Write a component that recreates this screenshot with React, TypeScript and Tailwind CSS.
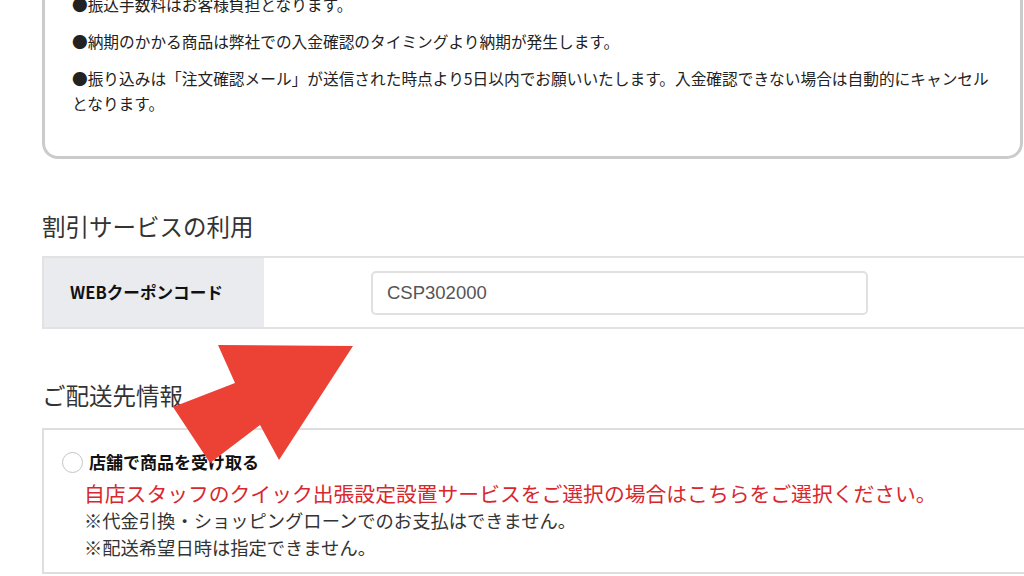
export default function App() {
    const jp = { fontFamily: '"Noto Sans CJK JP", "Noto Sans", sans-serif' };

    return (
        <div className="relative w-[1024px] h-[576px] overflow-hidden bg-white text-[#222]" style={jp}>
            <div className="pl-[42px]">
                {/* Payment notes */}
                <div className="-mt-[30px] w-[981px] rounded-b-[16px] border-[3px] border-t-0 border-[#cbcbcb] pl-[27px] pr-[16px] pt-[22px] pb-[40px] text-[15.7px] leading-[25px]">
                    <p className="mb-[12px] whitespace-nowrap">●振込手数料はお客様負担となります。</p>
                    <p className="mb-[12px] whitespace-nowrap">●納期のかかる商品は弊社での入金確認のタイミングより納期が発生します。</p>
                    <p className="whitespace-nowrap">
                        ●振り込みは「注文確認メール」が送信された時点より5日以内でお願いいたします。入金確認できない場合は自動的にキャンセル
                        <br />
                        となります。
                    </p>
                </div>

                {/* Discount */}
                <h2 className="mt-[51px] mb-[14px] text-[23.5px] leading-[32px] text-[#333]">割引サービスの利用</h2>
                <div className="flex h-[73px] w-[1100px] border-y-2 border-[#e2e2e2]">
                    <div className="flex w-[222px] items-center border-l-2 border-[#e2e2e2] bg-[#e9ebee] pl-[26px] text-[16.6px] font-bold text-[#111]">
                        WEBクーポンコード
                    </div>
                    <div className="flex items-center pl-[107px]">
                        <div className="flex h-[44px] w-[497px] items-center rounded-[5px] border-2 border-[#e0e0e0] pl-[14px] text-[18.5px] text-[#555]" style={{ fontFamily: '"Liberation Sans", Arial, sans-serif' }}>
                            CSP302000
                        </div>
                    </div>
                </div>

                {/* Delivery */}
                <h2 className="mt-[50px] mb-[17px] text-[23.5px] leading-[32px] text-[#333]">ご配送先情報</h2>
                <div className="w-[1100px] border-2 border-[#dedede] pl-[18px] pt-[20px] pb-[11px]">
                    <div className="flex h-[24px] items-center gap-[6px]">
                        <span className="h-[21px] w-[21px] rounded-full border-[1.5px] border-[#c4c4c4] bg-white" />
                        <span className="text-[17px] font-bold text-[#111]">店舗で商品を受け取る</span>
                    </div>
                    <div className="pl-[22px]">
                        <p className="mt-[5px] whitespace-nowrap text-[20.8px] leading-[28px] text-[#d8282e]">
                            自店スタッフのクイック出張設定設置サービスをご選択の場合はこちらをご選択ください。
                        </p>
                        <p className="whitespace-nowrap text-[18.3px] leading-[27px] text-[#333]">※代金引換・ショッピングローンでのお支払はできません。</p>
                        <p className="whitespace-nowrap text-[18.3px] leading-[27px] text-[#333]">※配送希望日時は指定できません。</p>
                    </div>
                </div>
            </div>

            {/* Red arrow overlay */}
            <svg className="pointer-events-none absolute left-0 top-0" width="1024" height="576" viewBox="0 0 1024 576">
                <polygon points="218,345 353,346 279,460 260,425 210,463 173,407 235,383" fill="#ec4236" />
            </svg>
        </div>
    );
}
